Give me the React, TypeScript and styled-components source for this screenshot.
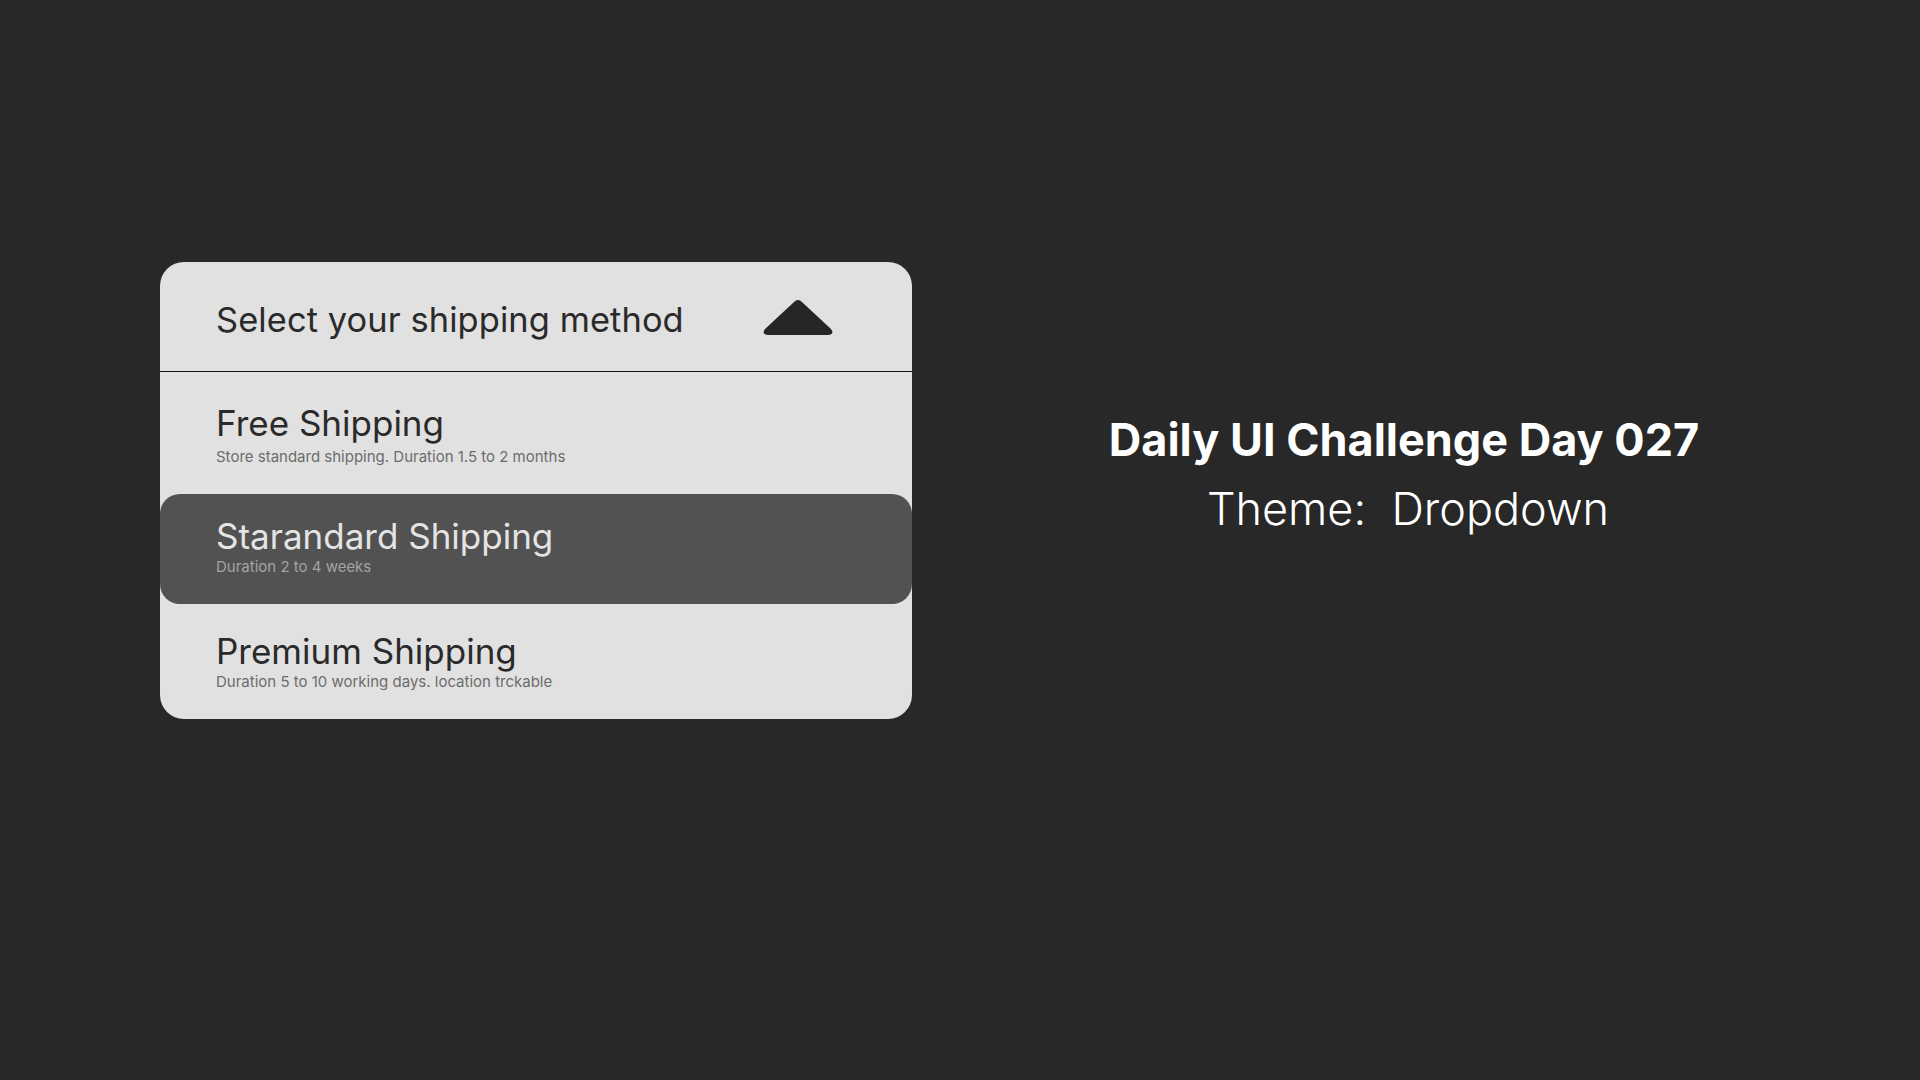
import * as React from "react";
import styled, { createGlobalStyle } from "styled-components";

const GlobalStyle = createGlobalStyle`
  html, body {
    margin: 0;
    padding: 0;
    background: #282828;
  }
  body {
    font-family: Inter, "Noto Sans", "Liberation Sans", sans-serif;
  }
`;

interface IOption {
  title: string;
  note: string;
  height: number;
  top: number;
  gap: number;
}

const options: IOption[] = [
  { title: "Free Shipping", note: "Store standard shipping. Duration 1.5 to 2 months", height: 122, top: 34, gap: 8 },
  { title: "Starandard Shipping", note: "Duration 2 to 4 weeks", height: 110, top: 25, gap: 5 },
  { title: "Premium Shipping", note: "Duration 5 to 10 working days. location trckable", height: 115, top: 30, gap: 5 },
];

const App: React.FunctionComponent = () => {
  const [selected, setSelected] = React.useState(1);

  return (
    <>
      <GlobalStyle />
      <Page>
        <Dropdown>
          <DropdownHeader>
            <HeaderLabel>Select your shipping method</HeaderLabel>
            <Caret viewBox='0 0 72 36' width={72} height={36}>
              <path
                d='M31.8 3.2 Q36 -1 40.2 3.2 L69 30 Q73 35.5 66 36 L6 36 Q-1 35.5 3 30 Z'
                fill='#262626'
              />
            </Caret>
          </DropdownHeader>
          <OptionList>
            {options.map((o, i) => (
              <Option
                key={o.title}
                $active={i === selected}
                $height={o.height}
                $top={o.top}
                onClick={() => setSelected(i)}
              >
                <OptionTitle $active={i === selected}>{o.title}</OptionTitle>
                <OptionNote $active={i === selected} $gap={o.gap}>
                  {o.note}
                </OptionNote>
              </Option>
            ))}
          </OptionList>
        </Dropdown>

        <Caption>
          <CaptionTitle>Daily UI Challenge Day 027</CaptionTitle>
          <CaptionTheme>Theme:&nbsp; Dropdown</CaptionTheme>
        </Caption>
      </Page>
    </>
  );
};

const Page = styled.div`
  display: flex;
  align-items: flex-start;
  width: 1920px;
  height: 1080px;
  box-sizing: border-box;
  padding: 262px 32px 0 160px;
`;

const Dropdown = styled.div`
  width: 752px;
  background: #e1e1e1;
  border-radius: 24px;
  overflow: hidden;
`;

const DropdownHeader = styled.div`
  display: flex;
  align-items: center;
  justify-content: space-between;
  height: 110px;
  box-sizing: border-box;
  padding: 6px 78px 0 56px;
  border-bottom: 1.5px solid #111111;
`;

const HeaderLabel = styled.span`
  font-size: 34.4px;
  color: #2a2a2a;
  letter-spacing: 0.1px;
`;

const Caret = styled.svg`
  display: block;
  margin-top: -6px;
`;

const OptionList = styled.div`
  display: flex;
  flex-direction: column;
`;

const Option = styled.div<{ $active: boolean; $height: number; $top: number }>`
  display: flex;
  flex-direction: column;
  align-items: flex-start;
  height: ${(p) => p.$height}px;
  box-sizing: border-box;
  padding: ${(p) => p.$top}px 56px 0;
  border-radius: ${(p) => (p.$active ? "20px" : "0")};
  background: ${(p) => (p.$active ? "#525252" : "transparent")};
  cursor: pointer;
`;

const OptionTitle = styled.div<{ $active: boolean }>`
  font-size: 35px;
  line-height: 34px;
  color: ${(p) => (p.$active ? "#e4e4e4" : "#2a2a2a")};
`;

const OptionNote = styled.div<{ $active: boolean; $gap: number }>`
  margin-top: ${(p) => p.$gap}px;
  font-size: 15px;
  line-height: 18px;
  color: ${(p) => (p.$active ? "#a3a3a3" : "#6c6c6c")};
`;

const Caption = styled.div`
  flex: 1;
  display: flex;
  flex-direction: column;
  align-items: center;
  margin-top: 152px;
  padding-left: 8px;
  color: #ffffff;
`;

const CaptionTitle = styled.div`
  font-size: 45px;
  font-weight: 700;
  line-height: 52px;
`;

const CaptionTheme = styled.div`
  font-size: 45px;
  font-weight: 300;
  line-height: 52px;
  margin-top: 17px;
  padding-left: 8px;
`;

export default App;
